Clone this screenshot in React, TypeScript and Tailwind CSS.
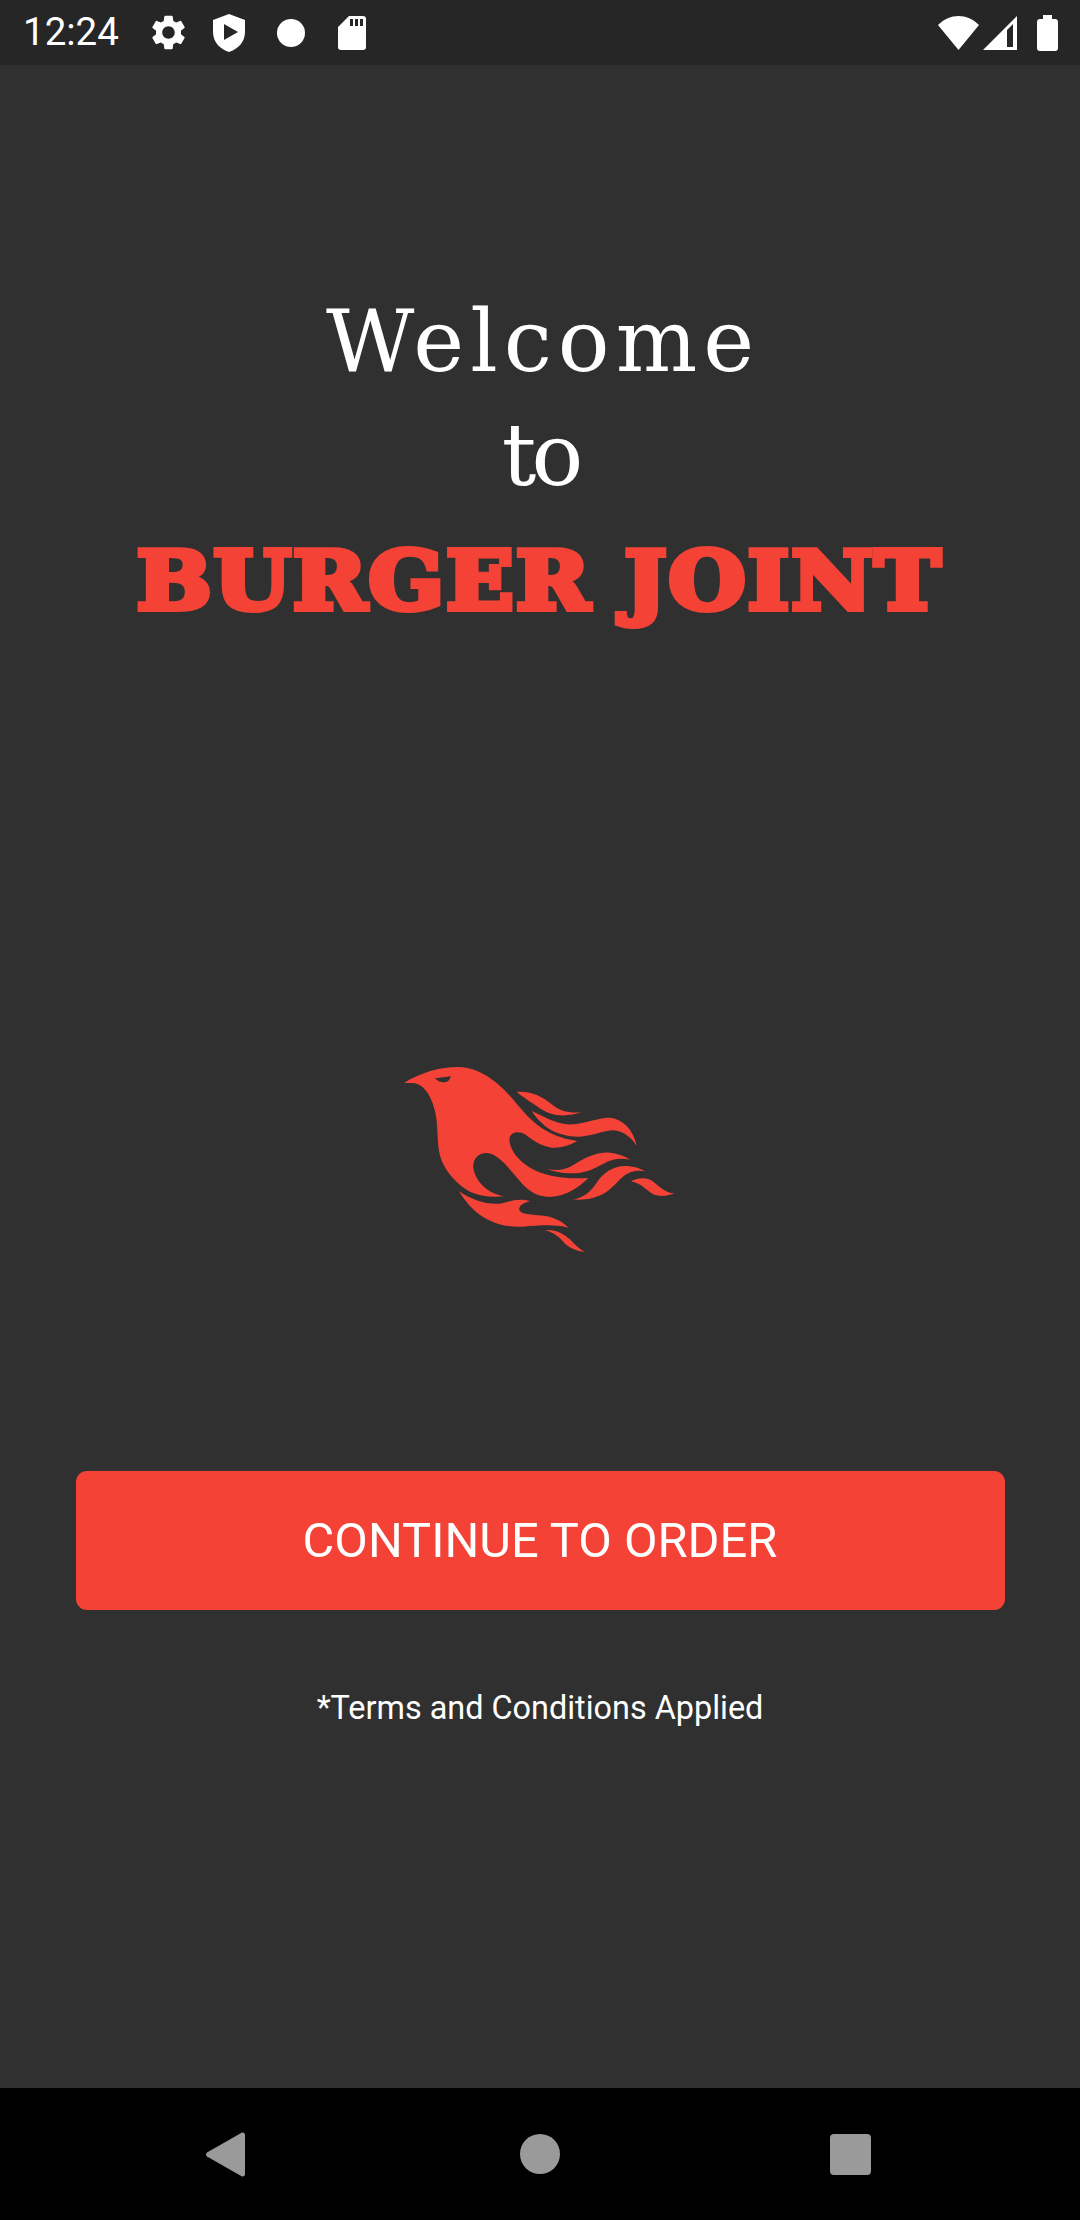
// Burger Joint welcome screen
const RED = "#f44336";

function StatusBar() {
  return (
    <div className="flex h-[65px] shrink-0 items-center bg-[#262626] pl-[23px] text-white">
      <span className="w-[129px] font-['Roboto',sans-serif] text-[38.5px] leading-none">12:24</span>
      <svg viewBox="2.5 2 19 20" className="h-[35px] w-[33px] fill-white">
        <path d="M19.14 12.94c.04-.3.06-.61.06-.94 0-.32-.02-.64-.07-.94l2.03-1.58c.18-.14.23-.41.12-.61l-1.92-3.32c-.12-.22-.37-.29-.59-.22l-2.39.96c-.5-.38-1.03-.7-1.62-.94l-.36-2.54c-.04-.24-.24-.41-.48-.41h-3.84c-.24 0-.43.17-.47.41l-.36 2.54c-.59.24-1.13.57-1.62.94l-2.39-.96c-.22-.08-.47 0-.59.22L2.74 8.87c-.12.21-.08.47.12.61l2.03 1.58c-.05.3-.09.63-.09.94s.02.64.07.94l-2.03 1.58c-.18.14-.23.41-.12.61l1.92 3.32c.12.22.37.29.59.22l2.39-.96c.5.38 1.03.7 1.62.94l.36 2.54c.05.24.24.41.48.41h3.84c.24 0 .44-.17.47-.41l.36-2.54c.59-.24 1.13-.56 1.62-.94l2.39.96c.22.08.47 0 .59-.22l1.92-3.32c.12-.22.07-.47-.12-.61l-2.01-1.58zM12 15.6c-1.98 0-3.6-1.62-3.6-3.6s1.62-3.6 3.6-3.6 3.6 1.62 3.6 3.6-1.62 3.6-3.6 3.6z" />
      </svg>
      <svg viewBox="0 0 32 38" className="ml-7 h-[38px] w-[32px] fill-white">
        <path fillRule="evenodd" d="M16 0 L32 6 V18 C32 28 25 35 16 38 C7 35 0 28 0 18 V6 Z M11 10 V26 L25 18 Z" />
      </svg>
      <div className="ml-8 h-7 w-7 rounded-full bg-white" />
      <svg viewBox="0 0 28 34" className="ml-[33px] h-[34px] w-7 fill-white">
        <path fillRule="evenodd" d="M11 0 H25 A3 3 0 0 1 28 3 V31 A3 3 0 0 1 25 34 H3 A3 3 0 0 1 0 31 V11 Z M12 3 V10 H15 V3 Z M17 3 V10 H20 V3 Z M22 3 V10 H25 V3 Z" />
      </svg>
      <svg viewBox="0 0 41 34" className="ml-auto h-[34px] w-[41px] fill-white">
        <path d="M0 9 C12 -3 29 -3 41 9 L20.5 34 Z" />
      </svg>
      <svg viewBox="0 0 34 34" className="ml-1 h-[34px] w-[34px] fill-white">
        <path fillRule="evenodd" d="M34 0 V34 H0 Z M24 14 L30 8 V31 H24 Z" />
      </svg>
      <svg viewBox="0 0 21 36" className="ml-5 mr-[22px] h-9 w-[21px] fill-white">
        <path d="M6 0 H15 V4 H18 A3 3 0 0 1 21 7 V33 A3 3 0 0 1 18 36 H3 A3 3 0 0 1 0 33 V7 A3 3 0 0 1 3 4 H6 Z" />
      </svg>
    </div>
  );
}

function Phoenix() {
  return (
    <svg viewBox="0 0 900 630" className="h-[210px] w-[300px]" fill={RED}>
      <path
        fillRule="evenodd"
        d="M42 96 C90 65 150 48 205 48 C270 50 320 90 365 140 C395 175 425 215 470 240 C500 258 530 265 562 270 C535 285 510 292 485 290 C450 285 425 265 405 250 C385 238 360 242 358 265 C358 295 385 330 420 350 C470 378 530 385 595 381 C565 410 530 435 480 438 C435 438 410 415 385 385 C355 350 325 308 290 306 C265 305 248 325 250 350 C255 385 285 425 342 436 C300 440 270 435 240 422 C200 400 165 360 152 320 C140 280 145 240 138 195 C130 150 110 105 75 97 C62 95 52 96 42 96 Z M135 82 C150 80 170 78 182 75 C180 88 172 94 160 94 C150 94 142 90 135 82 Z"
      />
      <path d="M207 420 C240 445 290 462 330 458 C360 452 385 440 420 451 C400 455 385 465 388 478 C395 492 430 490 470 496 C500 502 520 515 535 530 C500 520 450 522 400 527 C350 530 310 518 275 495 C245 475 225 450 207 420 Z" />
      <path d="M465 537 C500 535 525 550 545 570 C555 582 570 595 585 603 C560 600 535 590 520 572 C505 555 490 545 465 537 Z" />
      <path d="M380 123 C420 120 455 135 485 160 C510 182 540 187 575 184 C550 192 525 195 500 192 C470 187 450 172 425 155 C410 145 395 135 380 123 Z" />
      <path d="M425 180 C460 195 490 215 530 220 C570 222 610 205 650 200 C690 198 730 230 740 285 C725 260 700 240 670 238 C640 238 610 255 570 257 C530 258 490 245 465 225 C450 212 435 197 425 180 Z" />
      <path d="M472 354 C500 360 525 358 550 342 C585 320 620 302 660 305 C685 308 705 315 720 326 C690 320 665 325 640 338 C610 355 580 368 540 367 C515 366 490 362 472 354 Z" />
      <path d="M548 445 C580 440 600 425 620 395 C640 365 670 345 705 345 C730 345 750 352 765 361 C740 355 715 362 695 380 C670 405 650 430 610 440 C590 446 565 447 548 445 Z" />
      <path d="M723 391 C745 380 770 378 790 392 C810 408 825 425 853 427 C835 435 810 438 790 430 C770 420 760 400 723 391 Z" />
    </svg>
  );
}

function NavBar() {
  return (
    <div className="flex h-[132px] shrink-0 items-center bg-black pl-[206px]">
      <svg viewBox="0 0 39 45" className="h-[45px] w-[39px] fill-[#9a9a9a]">
        <path d="M36 0.5 A2.5 2.5 0 0 1 39 2.5 V42.5 A2.5 2.5 0 0 1 36 44.5 L1 24.5 A2.5 2.5 0 0 1 1 20.5 Z" />
      </svg>
      <div className="ml-[275px] h-10 w-10 rounded-full bg-[#9a9a9a]" />
      <div className="ml-[270px] h-[41px] w-[41px] rounded-[4px] bg-[#9a9a9a]" />
    </div>
  );
}

export default function App() {
  return (
    <div className="flex h-[2220px] w-[1080px] flex-col bg-[#303030]">
      <StatusBar />
      <main className="flex flex-1 flex-col items-center pt-[226px]">
        <h1 className="pl-[6px] font-['DejaVu_Serif',serif] text-[86px] leading-[100px] font-normal tracking-[6px] text-white">
          Welcome
        </h1>
        <p className="mt-[14px] font-['DejaVu_Serif',serif] text-[86px] leading-[100px] tracking-[-5px] text-white">to</p>
        <h2 className="mt-[26px] scale-x-[1.105] font-['DejaVu_Serif',serif] text-[80px] leading-[100px] font-bold tracking-[2px] whitespace-nowrap text-[#f44336] [-webkit-text-stroke:6px_#f44336]">
          BURGER JOINT
        </h2>
        <div className="mt-[420px]">
          <Phoenix />
        </div>
        <button className="mt-[210px] flex h-[139px] w-[929px] items-center justify-center rounded-[11px] bg-[#f44336] font-['Roboto',sans-serif] text-[48.8px] text-white">
          CONTINUE TO ORDER
        </button>
        <p className="mt-[78px] font-['Roboto',sans-serif] text-[32.4px] leading-[40px] text-white">
          *Terms and Conditions Applied
        </p>
      </main>
      <NavBar />
    </div>
  );
}
